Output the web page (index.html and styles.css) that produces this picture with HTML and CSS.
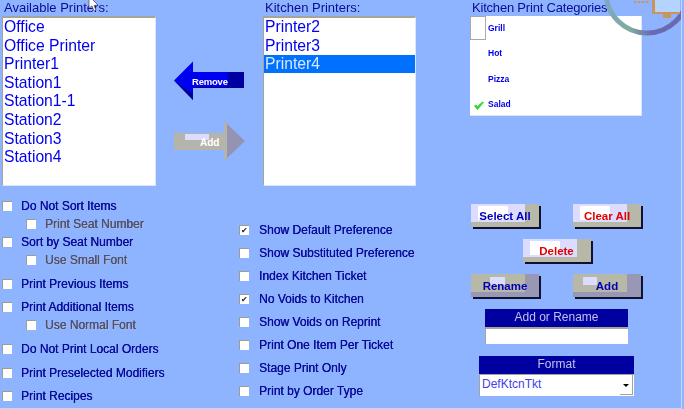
FILE: index.html
```html
<!DOCTYPE html>
<html lang="en">
<head>
    <meta charset="UTF-8">
    <title>Kitchen Printers</title>
    <link rel="stylesheet" href="styles.css">
</head>
<body>
    <div class="screen">
        <div class="top">
            <div class="col-printers">
                <div class="col-title">Available Printers:</div>
                <div class="list">
                    <div class="list-item">Office</div>
                    <div class="list-item">Office Printer</div>
                    <div class="list-item">Printer1</div>
                    <div class="list-item">Station1</div>
                    <div class="list-item">Station1-1</div>
                    <div class="list-item">Station2</div>
                    <div class="list-item">Station3</div>
                    <div class="list-item">Station4</div>
                </div>
            </div>
            <div class="col-arrows">
                <svg class="arrow-remove" width="72" height="40" viewBox="0 0 72 40">
                    <polygon points="1,19.5 20,0.5 20,11 71,11 71,27 20,27 20,39" fill="#0000f0"/>
                    <polygon points="1,19.5 20,39 20,33" fill="#000090"/>
                    <rect x="55" y="11" width="16" height="16" fill="#0000a0"/>
                    <rect x="20" y="26" width="51" height="1" fill="#000090"/>
                    <text x="19" y="24" class="arrow-text">Remove</text>
                </svg>
                <svg class="arrow-add" width="72" height="42" viewBox="0 0 72 42">
                    <rect x="1" y="13" width="52" height="17" fill="#b4b4aa"/>
                    <polygon points="51,1 72,21 51,41" fill="#9494b2"/>
                    <polygon points="51,1 54,4 54,38 51,41" fill="#b4b4aa"/>
                    <rect x="12" y="14" width="24" height="6" fill="#dcdcff"/>
                    <text x="27" y="26" class="arrow-text">Add</text>
                </svg>
            </div>
            <div class="col-printers">
                <div class="col-title">Kitchen Printers:</div>
                <div class="list">
                    <div class="list-item">Printer2</div>
                    <div class="list-item">Printer3</div>
                    <div class="list-item selected">Printer4</div>
                </div>
            </div>
            <div class="col-gap"></div>
            <div class="col-categories">
                <div class="col-title tight">Kitchen Print Categories:</div>
                <div class="categories">
                    <div class="cat-row"><span class="cat-mark first"></span>Grill</div>
                    <div class="cat-row"><span class="cat-mark"></span>Hot</div>
                    <div class="cat-row"><span class="cat-mark"></span>Pizza</div>
                    <div class="cat-row">
                        <span class="cat-mark">
                            <svg width="10" height="9" viewBox="0 0 10 9"><path d="M0.5 5 L3.5 8.5 L9.5 1.5 L8.5 1 L3.5 5.5 L2 4 Z" fill="#2bdc2b" stroke="#2bdc2b" stroke-width="0.8"/></svg>
                        </span>Salad
                    </div>
                </div>
            </div>
        </div>

        <div class="bottom">
            <div class="options-left">
                <div class="group">
                    <label class="opt"><span class="box"></span>Do Not Sort Items</label>
                    <label class="opt sub"><span class="box"></span>Print Seat Number</label>
                    <label class="opt"><span class="box"></span>Sort by Seat Number</label>
                    <label class="opt sub"><span class="box"></span>Use Small Font</label>
                </div>
                <div class="group">
                    <label class="opt"><span class="box"></span>Print Previous Items</label>
                </div>
                <div class="group">
                    <label class="opt"><span class="box"></span>Print Additional Items</label>
                    <label class="opt sub"><span class="box"></span>Use Normal Font</label>
                </div>
                <div class="group">
                    <label class="opt"><span class="box"></span>Do Not Print Local Orders</label>
                </div>
                <div class="group">
                    <label class="opt"><span class="box"></span>Print Preselected Modifiers</label>
                </div>
                <div class="group">
                    <label class="opt"><span class="box"></span>Print Recipes</label>
                </div>
            </div>

            <div class="options-mid">
                <label class="opt"><span class="box checked">&#10004;</span>Show Default Preference</label>
                <label class="opt"><span class="box"></span>Show Substituted Preference</label>
                <label class="opt"><span class="box"></span>Index Kitchen Ticket</label>
                <label class="opt"><span class="box checked">&#10004;</span>No Voids to Kitchen</label>
                <label class="opt"><span class="box"></span>Show Voids on Reprint</label>
                <label class="opt"><span class="box"></span>Print One Item Per Ticket</label>
                <label class="opt"><span class="box"></span>Stage Print Only</label>
                <label class="opt"><span class="box"></span>Print by Order Type</label>
            </div>

            <div class="actions">
                <div class="btn-row">
                    <div class="btn">Select All</div>
                    <div class="btn red">Clear All</div>
                </div>
                <div class="btn-row center">
                    <div class="btn red">Delete</div>
                </div>
                <div class="btn-row">
                    <div class="btn off rename">Rename</div>
                    <div class="btn off">Add</div>
                </div>
                <div class="field field-name">
                    <div class="field-title">Add or Rename</div>
                    <div class="field-input"></div>
                </div>
                <div class="field field-format">
                    <div class="field-title">Format</div>
                    <div class="field-select">DefKtcnTkt<span class="select-btn"></span></div>
                </div>
            </div>
        </div>

        <svg class="logo" width="94" height="50" viewBox="0 0 94 50">
            <defs>
                <linearGradient id="ring" x1="0" y1="0" x2="1" y2="0">
                    <stop offset="0" stop-color="#7fa8c0"/>
                    <stop offset="0.3" stop-color="#82aa9e"/>
                    <stop offset="0.55" stop-color="#6a6ab0"/>
                    <stop offset="1" stop-color="#6a6ab0"/>
                </linearGradient>
            </defs>
            <circle cx="58" cy="-8" r="41" fill="none" stroke="url(#ring)" stroke-width="5"/>
            <path d="M45 2 H60" stroke="#c8965a" stroke-width="2" stroke-dasharray="2.5 1.5"/>
            <rect x="63" y="-4" width="28" height="18" fill="#c8965a"/>
            <rect x="66" y="-4" width="25" height="16" fill="#b4d4ff"/>
            <rect x="74" y="14" width="8" height="4" fill="#c8965a"/>
        </svg>
        <svg class="cursor" width="13" height="12" viewBox="0 0 13 12">
            <path d="M1 -4 L1 8 L4 6 L6 11 L8 10 L6 5.500 L10 5 Z" fill="#ffffff" stroke="#555566" stroke-width="0.8"/>
        </svg>
    </div>
</body>
</html>
```

FILE: styles.css
```css
*{
    box-sizing: border-box;
}
body{
    margin: 0px;
    background: #8fb4ff;
    overflow: hidden;
    font-family: "Liberation Sans", Arial, sans-serif;
}
.screen{
    position: relative;
    width: 682px;
    height: 409px;
    border-right: #c4d6ff solid 1px;
    border-bottom: #c4d6ff solid 1px;
    overflow: hidden;
    filter: blur(0.4px);
}
.top{
    display: grid;
    grid-template-columns: 156px 107px 153px 54px 172px;
    height: 190px;
}
.col-title{
    height: 16px;
    padding-left: 2px;
    font-size: 13px;
    line-height: 15px;
    color: #0a0a98;
    white-space: nowrap;
}
.col-title.tight{
    letter-spacing: -0.2px;
}
.col-printers:first-child{
    margin-left: 2px;
}
.list{
    height: 170px;
    background: #ffffff;
    border-top: #a4a498 solid 2px;
    border-left: #a4a498 solid 1px;
    border-right: #dbe6ff solid 1px;
    border-bottom: #dbe6ff solid 1px;
}
.list-item{
    height: 18.6px;
    padding-left: 1px;
    font-size: 15.7px;
    line-height: 18px;
    color: #0000ee;
}
.list-item.selected{
    height: 18px;
    background: #0070ff;
    color: #d8e8ff;
}
.col-arrows{
    display: flex;
    flex-direction: column;
    gap: 19px;
    padding: 61px 0px 0px 17px;
}
.arrow-text{
    font-size: 9.5px;
    font-weight: bold;
    fill: #ffffff;
}
.arrow-remove .arrow-text{
    letter-spacing: -0.2px;
}
.arrow-add .arrow-text{
    font-size: 10px;
}
.categories{
    height: 100px;
    background: #ffffff;
    border-right: #dbe6ff solid 1px;
    border-bottom: #dbe6ff solid 1px;
}
.cat-row{
    display: flex;
    align-items: center;
    height: 25.3px;
    padding-bottom: 1px;
    font-size: 8.500px;
    font-weight: bold;
    color: #0000f0;
}
.cat-mark{
    display: flex;
    align-items: center;
    justify-content: center;
    flex: none;
    width: 18px;
    height: 24px;
    padding-top: 3px;
}
.cat-mark.first{
    width: 16px;
    margin-right: 2px;
    border: #a8a8a8 solid 1px;
}
.bottom{
    display: grid;
    grid-template-columns: 239px 232px 172px;
}
.options-left{
    display: flex;
    flex-direction: column;
    gap: 5.7px;
    padding: 7px 0px 0px 2px;
}
.options-mid{
    display: grid;
    grid-auto-rows: 23.1px;
    padding-top: 28px;
    align-content: start;
}
.opt{
    display: flex;
    align-items: center;
    gap: 9px;
    height: 18px;
    font-size: 12px;
    font-weight: normal;
    color: #0a0a98;
    text-shadow: 0.3px 0px 0px #0a0a98;
    white-space: nowrap;
}
.options-mid .opt{
    height: 23px;
    gap: 10px;
}
.opt.sub{
    padding-left: 24px;
    color: #505070;
    text-shadow: 0.3px 0px 0px #505070, 1px 1px 0.5px #a8b8d8;
}
.box{
    display: block;
    flex: none;
    width: 10px;
    height: 10px;
    background: #ffffff;
    border-top: #9c9c90 solid 1px;
    border-left: #9c9c90 solid 1px;
    font-size: 8px;
    line-height: 9px;
    text-align: center;
    color: #202020;
    text-shadow: none;
}
.actions{
    display: flex;
    flex-direction: column;
    padding-top: 14px;
}
.btn-row{
    display: flex;
    justify-content: space-between;
    width: 170px;
    margin-bottom: 12px;
}
.btn-row.center{
    justify-content: center;
    padding-left: 1px;
}
.btn{
    width: 68px;
    height: 23px;
    background:
        linear-gradient(#ffffff, #ffffff) 7px 2px / 30px 14px no-repeat,
        linear-gradient(#b8b8a8, #b8b8a8) right / 14px 100% no-repeat,
        linear-gradient(#b8b8a8, #b8b8a8) bottom / 100% 5px no-repeat,
        #dcdcff;
    box-shadow: 2px 2px 0px #101030;
    font-size: 11.5px;
    font-weight: bold;
    line-height: 24px;
    text-align: center;
    color: #0000b8;
}
.btn.red{
    color: #e00000;
}
.btn.off{
    background:
        linear-gradient(#dcdcff, #dcdcff) 10px 3px / 14px 8px no-repeat,
        linear-gradient(#9898b4, #9898b4) right / 14px 100% no-repeat,
        linear-gradient(#9898b4, #9898b4) bottom / 100% 5px no-repeat,
        #b8b8a8;
}
.btn.rename{
    background:
        linear-gradient(#dcdcff, #dcdcff) 19px 3px / 15px 8px no-repeat,
        linear-gradient(#9898b4, #9898b4) right / 14px 100% no-repeat,
        linear-gradient(#9898b4, #9898b4) bottom / 100% 5px no-repeat,
        #b8b8a8;
}
.field{
    display: flex;
    flex-direction: column;
}
.field-name{
    width: 143px;
    margin: 0px 0px 12px 14px;
}
.field-format{
    width: 155px;
    margin-left: 8px;
}
.field-title{
    height: 18px;
    background: #0000a0;
    font-size: 12px;
    line-height: 17px;
    text-align: center;
    color: #c0c0f0;
}
.field-input{
    height: 17px;
    background: #ffffff;
    border-top: #a4a498 solid 2px;
    border-left: #a4a498 solid 1px;
}
.field-select{
    position: relative;
    height: 22px;
    padding-left: 2px;
    background: #ffffff;
    border-top: #a4a498 solid 1px;
    border-left: #a4a498 solid 1px;
    font-size: 12px;
    line-height: 19px;
    color: #4040f0;
}
.select-btn{
    position: absolute;
    right: 1px;
    bottom: 1px;
    width: 13px;
    height: 20px;
    border-right: #a4a498 solid 1px;
    border-bottom: #a4a498 solid 1px;
}
.select-btn::after{
    content: "";
    position: absolute;
    left: 3px;
    top: 9px;
    border-left: 3px solid transparent;
    border-right: 3px solid transparent;
    border-top: 3px solid #000000;
}
.logo{
    position: absolute;
    right: -2px;
    top: 0px;
}
.cursor{
    position: absolute;
    left: 88px;
    top: 0px;
}
```
